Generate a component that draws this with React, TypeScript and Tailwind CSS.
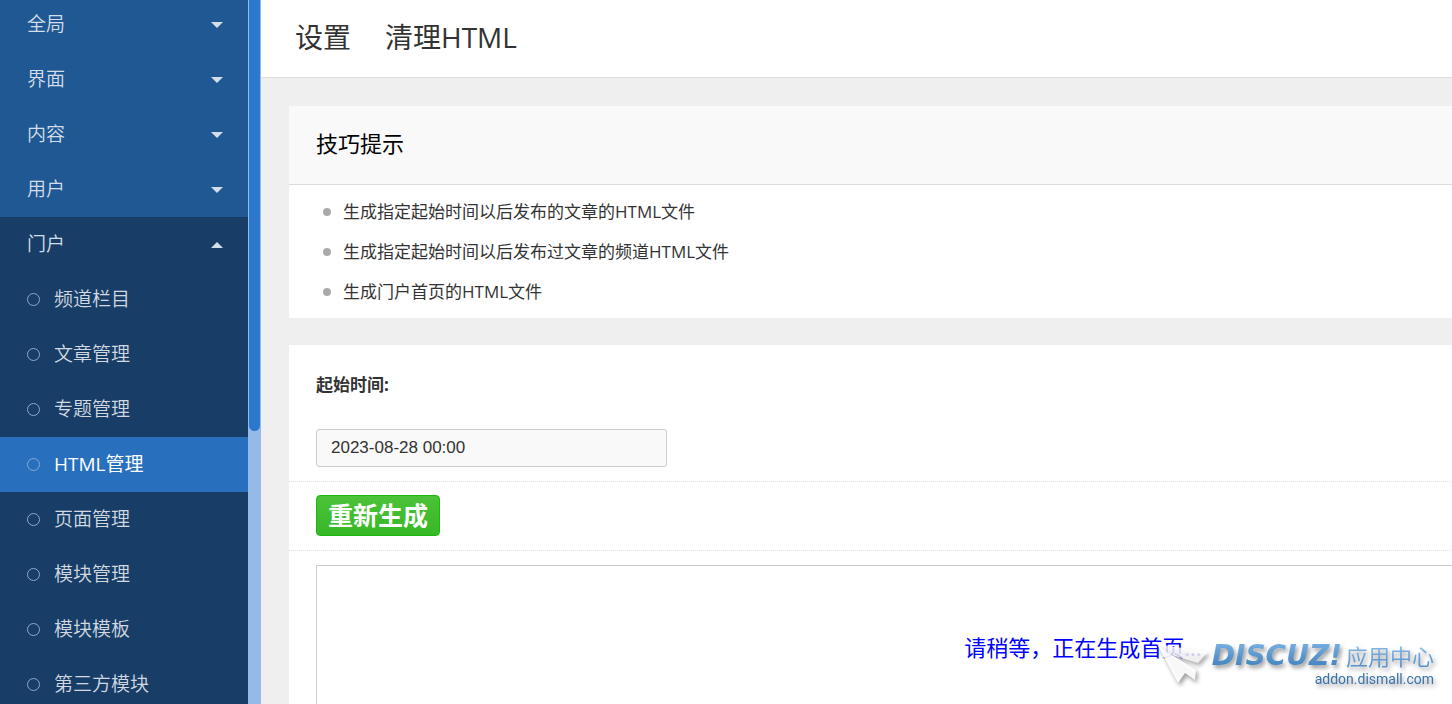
import { useState } from "react";
import clsx from "clsx";

const MENUS = ["全局", "界面", "内容", "用户"];

const PORTAL_ITEMS = [
  "频道栏目",
  "文章管理",
  "专题管理",
  "HTML管理",
  "页面管理",
  "模块管理",
  "模块模板",
  "第三方模块",
];

const TIPS = [
  "生成指定起始时间以后发布的文章的HTML文件",
  "生成指定起始时间以后发布过文章的频道HTML文件",
  "生成门户首页的HTML文件",
];

function Caret({ up = false }: { up?: boolean }) {
  return (
    <svg viewBox="0 0 12 6" className="h-[6px] w-3 fill-[#d3deea]" aria-hidden="true">
      <path d={up ? "M0 6 6 0l6 6z" : "M0 0h12L6 6z"} />
    </svg>
  );
}

function MenuButton({ label, open = false }: { label: string; open?: boolean }) {
  return (
    <button
      type="button"
      aria-expanded={open}
      className="flex h-[55px] w-full items-center justify-between pr-[25px] pl-[27px] text-[#d3deea]"
    >
      <span>{label}</span>
      <Caret up={open} />
    </button>
  );
}

function Sidebar() {
  const [active, setActive] = useState("HTML管理");

  return (
    <aside className="flex w-[261px] shrink-0 overflow-hidden">
      {/* scrolled down slightly, the first row is cut off */}
      <nav className="-mt-[3px] flex-1 bg-[#1f5892] text-[19px] font-[350]">
        {MENUS.map((label) => (
          <MenuButton key={label} label={label} />
        ))}
        <div className="bg-[#183e68]">
          <MenuButton label="门户" open />
          <ul>
            {PORTAL_ITEMS.map((item) => (
              <li key={item}>
                <a
                  href="#"
                  onClick={(e) => {
                    e.preventDefault();
                    setActive(item);
                  }}
                  className={clsx(
                    "flex h-[55px] items-center gap-[14px] pl-[27px]",
                    item === active ? "bg-[#286fbe] font-normal text-white" : "text-[#d3d9e0]"
                  )}
                >
                  <span className="size-[13px] rounded-full border border-[#8ba9c9]" />
                  {item}
                </a>
              </li>
            ))}
          </ul>
        </div>
      </nav>
      <div className="w-[13px] bg-[#94bae7] px-px">
        <div className="h-[431px] rounded-b-full bg-[#2b78ce]" />
      </div>
    </aside>
  );
}

function Watermark() {
  return (
    <div className="pointer-events-none absolute right-[18px] bottom-4 flex items-start drop-shadow-[2px_3px_2px_rgba(0,0,0,0.4)]">
      <svg viewBox="0 0 56 46" className="h-[46px] w-14" aria-hidden="true">
        <path d="M1 2 52 10 42 21 16 13z" fill="#fff" fillOpacity="0.8" />
        <path d="M1 2 16 13 40 28 39 38 29 31 22 41z" fill="#fff" fillOpacity="0.92" />
      </svg>
      <div>
        <div className="flex h-[28px] items-center gap-1">
          <span className="bg-gradient-to-b from-[#79b1e3] to-[#3b7dbb] bg-clip-text font-['DejaVu_Sans'] text-[28px] leading-[28px] font-bold text-transparent italic">
            DISCUZ!
          </span>
          <span className="bg-gradient-to-b from-[#8fbde8] to-[#4a8bc8] bg-clip-text text-[22px] leading-[28px] text-transparent">
            应用中心
          </span>
        </div>
        <div className="text-right font-[Roboto] text-[14px] leading-[18px] text-[#3b73ab]">
          addon.dismall.com
        </div>
      </div>
    </div>
  );
}

export default function App() {
  return (
    <div className="relative flex h-screen overflow-hidden bg-[#efefef] font-['Open_Sans','Noto_Sans_CJK_SC',sans-serif] text-[17px] text-[#333]">
      <Sidebar />

      <main className="min-w-0 flex-1 overflow-hidden">
        <header className="flex h-[78px] items-center gap-[34px] border-b border-[#ddd] bg-white px-[34px] pb-[3px] text-[28px]">
          <h1>设置</h1>
          <h2>清理HTML</h2>
        </header>

        <div className="flex flex-col gap-[27px] pt-7 pl-7">
          <section className="bg-white">
            <h3 className="flex h-[79px] items-center border-b border-[#ddd] bg-[#f9f9f9] px-[27px] pb-[3px] text-[22px] text-black">
              技巧提示
            </h3>
            <ul className="px-[34px] pt-[7px] pb-[6px]">
              {TIPS.map((tip) => (
                <li key={tip} className="flex h-10 items-center gap-3">
                  <span className="size-2 rounded-full bg-[#aaa]" />
                  {tip}
                </li>
              ))}
            </ul>
          </section>

          <form className="bg-white" onSubmit={(e) => e.preventDefault()}>
            <div className="flex flex-col items-start gap-6 border-b border-dotted border-[#dce5e9] px-[27px] pt-5 pb-[14px]">
              <label htmlFor="starttime" className="leading-10 font-bold">
                起始时间:
              </label>
              <input
                id="starttime"
                type="text"
                defaultValue="2023-08-28 00:00"
                className="h-[38px] w-[351px] rounded-[3px] border border-[#ccc] bg-[#f9f9f9] px-[14px] font-['Liberation_Sans'] text-[17px]"
              />
            </div>

            <div className="border-b border-dotted border-[#dce5e9] px-[27px] pt-[13px] pb-[14px]">
              <button
                type="submit"
                className="flex h-[41px] items-center rounded border border-[#1cb80f] bg-gradient-to-b from-[#4cc238] to-[#36b826] px-[11px] text-[25px] font-bold text-white"
              >
                重新生成
              </button>
            </div>

            <div className="pt-[14px] pl-[27px]">
              {/* result frame is wider than the viewport */}
              <div className="flex h-[300px] w-[135%] justify-center border border-[#ccc] bg-white pt-[65px] text-[22px] text-[#00f]">
                请稍等，正在生成首页...
              </div>
            </div>
          </form>
        </div>
      </main>

      <Watermark />
    </div>
  );
}
